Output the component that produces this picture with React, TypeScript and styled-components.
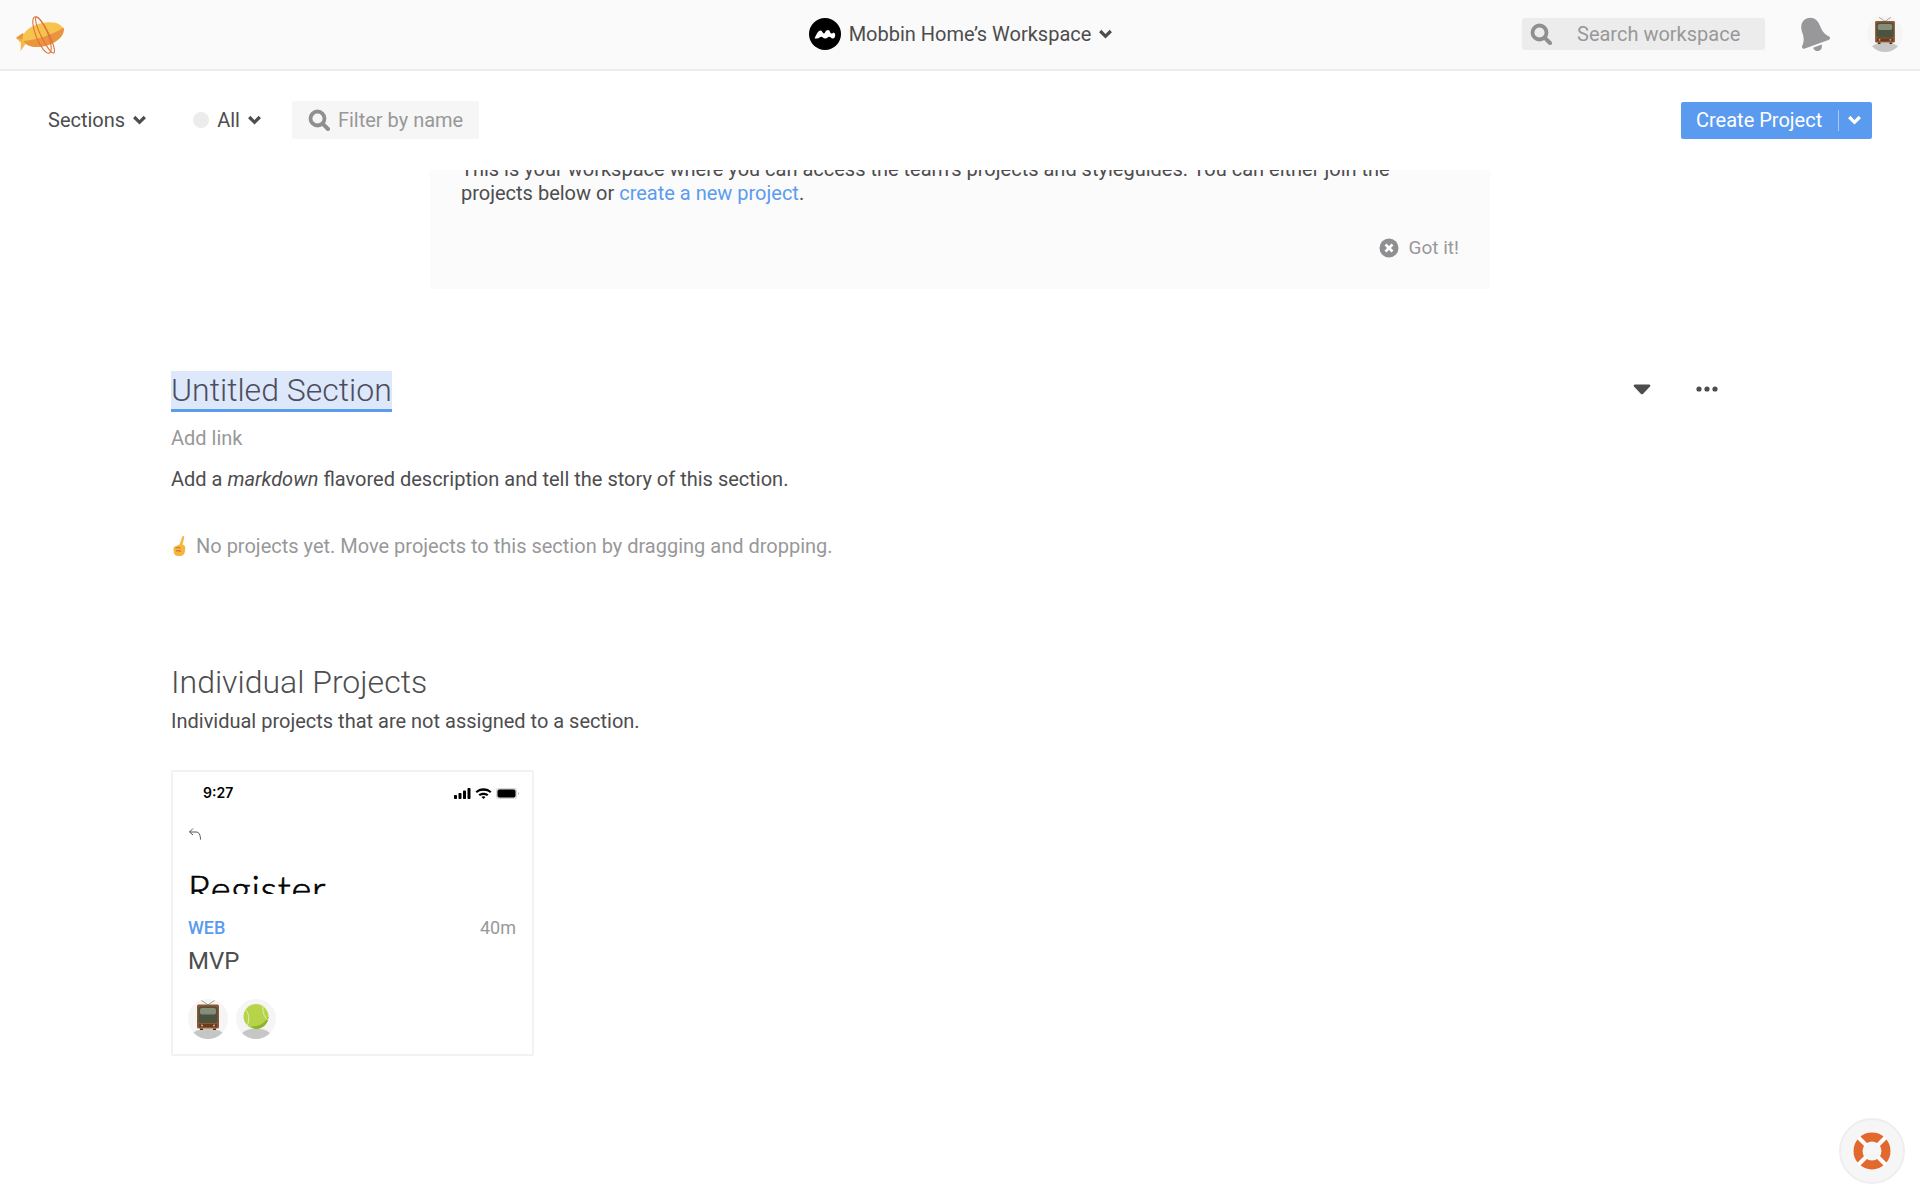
import React from "react";
import styled, { createGlobalStyle } from "styled-components";

const Global = createGlobalStyle`
  html, body { margin: 0; padding: 0; background: #fff; height: 100%; overflow: hidden; }
  body { font-family: Roboto, "Liberation Sans", sans-serif; color: #4a4a4a; }
  * { box-sizing: border-box; }
`;

const Page = styled.div`
  width: 1920px;
  height: 1200px;
  display: flex;
  flex-direction: column;
  overflow: hidden;
`;

const Header = styled.header`
  flex: none;
  height: 71px;
  background: #fafafa;
  border-bottom: 2px solid #ececec;
  display: grid;
  grid-template-columns: 1fr auto 1fr;
  align-items: center;
  padding: 0 17px 0 16px;
`;

const LogoSlot = styled.div`
  display: flex;
  align-items: center;
`;

const HeaderCenter = styled.div`
  display: flex;
  align-items: center;
  font-size: 20px;
  color: #4d4d4f;
  gap: 8px;
  margin: -1px 0 0 2px;
`;

const HeaderRight = styled.div`
  display: flex;
  align-items: center;
  justify-content: flex-end;
  margin-top: -1px;
`;

const SearchBox = styled.div`
  width: 243px;
  height: 32px;
  background: #ececec;
  border-radius: 2px;
  display: flex;
  align-items: center;
  gap: 25px;
  padding: 0 0 0 8px;
  font-size: 20px;
  color: #98989a;
  margin-right: 29px;
`;

const BellWrap = styled.div`
  width: 40px;
  height: 40px;
  margin-right: 33px;
`;

const Toolbar = styled.div`
  flex: none;
  height: 99px;
  background: #fff;
  display: flex;
  align-items: center;
  padding: 0 48px 1px;
  position: relative;
  z-index: 1;
`;

const MenuLabel = styled.div<{ $gap?: number }>`
  display: flex;
  align-items: center;
  font-size: 20px;
  color: #4d4d4f;
  gap: 8px;
  margin-right: ${(p) => p.$gap ?? 0}px;
`;

const Dot = styled.span`
  width: 16px;
  height: 16px;
  border-radius: 50%;
  background: #ececec;
`;

const FilterBox = styled.div`
  width: 187px;
  height: 38px;
  background: #f6f6f6;
  border-radius: 2px;
  display: flex;
  align-items: center;
  gap: 8px;
  padding-left: 16px;
  font-size: 20px;
  color: #98989a;
`;

const CreateButton = styled.div`
  margin-left: auto;
  width: 191px;
  height: 37px;
  background: #5b9bef;
  border-radius: 2px;
  display: flex;
  align-items: center;
  font-size: 20px;
  color: #fff;
  padding-left: 15px;
`;

const ButtonSplit = styled.span`
  width: 1px;
  height: 21px;
  background: rgba(255, 255, 255, 0.45);
  margin: 0 9px 0 16px;
`;

const Scroller = styled.main`
  flex: 1;
  min-height: 0;
  overflow: hidden;
  position: relative;
`;

const Notice = styled.section`
  width: 1060px;
  height: 132px;
  margin: 0 0 0 430px;
  background: #fbfbfb;
  padding: 0 31px;
  font-size: 20px;
  line-height: 24px;
  color: #4d4d4f;
`;

const NoticeText = styled.p`
  margin: -13px 0 0;
  width: 998px;
`;

const Link = styled.a`
  color: #5b9bef;
`;

const GotIt = styled.div`
  display: flex;
  justify-content: flex-end;
  align-items: center;
  gap: 10px;
  margin-top: 31px;
  font-size: 19px;
  color: #98989a;
`;

const Content = styled.div`
  padding: 0 0 0 171px;
`;

const SectionHead = styled.div`
  display: flex;
  align-items: center;
  justify-content: space-between;
  margin-top: 82px;
  padding-right: 202px;
`;

const SelectedTitle = styled.h2`
  margin: 0;
  font-weight: 300;
  font-size: 32px;
  line-height: 38px;
  height: 41px;
  color: #4d4d5f;
  background: #dde8fb;
  border-bottom: 3px solid #5b9bef;
`;

const SectionActions = styled.div`
  display: flex;
  align-items: center;
  gap: 45px;
  padding-bottom: 5px;
`;

const AddLink = styled.div`
  font-size: 20px;
  line-height: 24px;
  color: #98989a;
  margin-top: 14px;
`;

const Description = styled.p`
  margin: 17px 0 0;
  font-size: 20px;
  line-height: 24px;
  color: #4d4d4f;
`;

const Empty = styled.div`
  display: flex;
  align-items: center;
  gap: 7px;
  margin-top: 43px;
  font-size: 20px;
  line-height: 24px;
  color: #98989a;
`;

const IndividualTitle = styled.h2`
  margin: 104px 0 0;
  font-weight: 300;
  font-size: 32px;
  line-height: 40px;
  color: #4d4d4f;
`;

const IndividualText = styled.p`
  margin: 7px 0 0;
  font-size: 20px;
  line-height: 24px;
  color: #4d4d4f;
`;

const Card = styled.article`
  width: 363px;
  height: 286px;
  margin-top: 37px;
  background: #fff;
  border: 2px solid #f2f2f2;
  border-radius: 2px;
`;

const Preview = styled.div`
  height: 122px;
  overflow: hidden;
  color: #000;
  padding: 0 12px 0 15px;
`;

const StatusBar = styled.div`
  display: flex;
  align-items: center;
  justify-content: space-between;
  padding: 12px 0 0 15px;
  font-family: Inter, sans-serif;
  font-weight: 600;
  font-size: 14px;
  line-height: 18px;
`;

const BackIcon = styled.div`
  margin-top: 24px;
  height: 14px;
`;

const PreviewTitle = styled.div`
  margin-top: 25px;
  font-family: Lato, sans-serif;
  font-weight: 300;
  font-size: 38px;
  line-height: 46px;
  letter-spacing: 0.8px;
  -webkit-text-stroke: 0.7px #000;
`;

const CardBody = styled.div`
  padding: 0 16px 0 15px;
`;

const MetaRow = styled.div`
  display: flex;
  justify-content: space-between;
  align-items: center;
  margin-top: 23px;
  font-size: 18px;
  line-height: 22px;
`;

const Platform = styled.span`
  color: #5b9bef;
  font-weight: 500;
`;

const Duration = styled.span`
  color: #98989a;
`;

const CardName = styled.div`
  font-size: 24px;
  line-height: 30px;
  color: #4d4d4f;
  margin-top: 7px;
`;

const Avatars = styled.div`
  display: flex;
  gap: 8px;
  margin-top: 23px;
`;

const HelpButton = styled.div`
  position: fixed;
  right: 15px;
  bottom: 16px;
  width: 66px;
  height: 66px;
  border-radius: 50%;
  background: #f6f6f6;
  border: 2px solid #eeeeee;
  display: flex;
  align-items: center;
  justify-content: center;
`;

const Chevron = ({ color = "#4d4d4f" }: { color?: string }) => (
  <svg width="13" height="10" viewBox="0 0 13 10" fill="none">
    <path d="M1.2 2 6.500 7.300 11.800 2" stroke={color} strokeWidth="3.200" />
  </svg>
);

const Magnifier = ({ size = 22 }: { size?: number }) => (
  <svg width={size} height={size} viewBox="0 0 22 22" fill="none">
    <circle cx="9.500" cy="9.500" r="7" stroke="#8f8f91" strokeWidth="3.800" />
    <path d="M14.800 14.800 20 20" stroke="#8f8f91" strokeWidth="4" strokeLinecap="round" />
  </svg>
);

const Zeppelin = () => (
  <svg width="48" height="38" viewBox="0 0 48 38" fill="none">
    <path d="M0 22 7 17 11 26 4.500 35 5 27Z" fill="#f4b848" />
    <path d="M0 22 7 17 9 24Z" fill="#ea9340" />
    <ellipse cx="27" cy="18.500" rx="21" ry="11.500" transform="rotate(-15 27 18.500)" fill="#f6c34f" />
    <path d="M7.500 25C20 24 36 19 47.700 11.500 49.500 19 41 27 29.500 30 20 32.300 11 31 7.500 25Z" fill="#ea9340" />
    <ellipse cx="26" cy="19" rx="6" ry="19.500" transform="rotate(-22 26 19)" stroke="#e0733a" strokeWidth="1.100" />
    <ellipse cx="29" cy="19" rx="4" ry="20" transform="rotate(-26 29 19)" stroke="#e0733a" strokeWidth="1.100" />
  </svg>
);

const WorkspaceLogo = () => (
  <svg width="32" height="32" viewBox="0 0 32 32">
    <circle cx="16" cy="16" r="16" fill="#000" />
    <path
      d="M5.500 20.500C7.500 16.500 9 12.500 11.500 12.500 13.500 12.500 13.500 15.500 15 15.500 16 15.500 16.500 12 19 12 21 12 21 15.500 22.500 15.500 23.500 15.500 24 14.500 25 14.800 27 15.500 26.500 20.500 24 20.500 22 20.500 21.500 18.800 20.500 18.800 19 18.800 18.500 20.500 16 20.500 14 20.500 13.500 18.800 12.500 18.800 11 18.800 10 20.500 8 20.500Z"
      fill="#fff"
    />
  </svg>
);

const Bell = () => (
  <svg width="40" height="40" viewBox="0 0 40 40">
    <g transform="rotate(-20 20 20)" fill="#98989a">
      <path d="M19 3C12 3 9.500 9 9.500 14.500 9.500 20.500 8 24 4.500 27.500 3.500 29 4.500 30.500 6.500 30.500H31.500C33.500 30.500 34.500 29 33.500 27.500 30 24 28.500 20.500 28.500 14.500 28.500 9 26 3 19 3Z" />
      <path d="M14.500 32.500H23.500C23.500 35.500 21.500 37.500 19 37.500S14.500 35.500 14.500 32.500Z" />
    </g>
  </svg>
);

const TvAvatar = ({ size }: { size: number }) => (
  <svg width={size} height={size} viewBox="0 0 40 40">
    <circle cx="20" cy="20" r="20" fill="#f5f5f5" />
    <path d="M5.500 33.500C10 30.500 15 29.500 20 29.500S30 30.500 34.500 33.500C30.500 38 25 40 20 40S9.500 38 5.500 33.500Z" fill="#c6c6c6" />
    <path d="M20 6 13.500 1.500M20 6 26.500 1.500" stroke="#9a9a9a" strokeWidth="1" />
    <rect x="9" y="5.500" width="22" height="24" rx="1.500" fill="#91552f" />
    <rect x="10.500" y="7.500" width="19" height="16.500" rx="2.500" fill="#4a5240" />
    <rect x="12" y="9" width="16" height="6.500" rx="2" fill="#868e7a" />
    <rect x="11" y="25" width="18" height="3" fill="#6a3c1f" />
    <circle cx="14" cy="26.500" r="1" fill="#c9b79c" />
    <circle cx="26" cy="26.500" r="1" fill="#c9b79c" />
    <path d="M12 29.500H15V31H12ZM25 29.500H28V31H25Z" fill="#4d2a14" />
  </svg>
);

const BallAvatar = ({ size }: { size: number }) => (
  <svg width={size} height={size} viewBox="0 0 40 40">
    <circle cx="20" cy="20" r="20" fill="#f5f5f5" />
    <path d="M6 34C10 30.500 15 29.500 20 29.500S30 30.500 34 34C30 38 25 40 20 40S10 38 6 34Z" fill="#c6c6c6" />
    <circle cx="20" cy="17.500" r="12.500" fill="#b5d44a" />
    <path d="M20 30C26.500 30 32.500 24.500 32.500 17.500 29 24 24 27.500 15 27.500 16.500 29 18.500 29.700 20 30Z" fill="#8db230" />
    <path d="M9 10C13 14 14 21 11 27M27 6C26 12 28 18 32 21" stroke="#e3efb0" strokeWidth="1" fill="none" />
  </svg>
);

const PointUp = () => (
  <svg width="18" height="22" viewBox="0 0 18 22">
    <path d="M11.500 1C12.800.6 13.500 1.500 13.200 2.800L11.500 9.500C13.500 10 14.500 11.500 14.300 13.500L13.800 17C13.400 19.800 11.500 21 9 21H7C4.500 21 3 19.500 2.800 17.300L2.500 14C2.400 12.500 3.400 11.300 5 11L8.500 9.500Z" fill="#f4b63f" />
    <path d="M4.500 13C6.500 12.300 8.500 12.500 9.500 13.500M5 15.800C7 15.300 8.500 15.600 10 16.500" stroke="#c9792a" strokeWidth="1.200" fill="none" />
  </svg>
);

const CloseCircle = () => (
  <svg width="20" height="20" viewBox="0 0 20 20">
    <circle cx="10" cy="10" r="9.500" fill="#8f8f91" />
    <path d="M6.500 6.500 13.500 13.500M13.500 6.500 6.500 13.500" stroke="#fff" strokeWidth="2.600" />
  </svg>
);

const Lifebuoy = () => (
  <svg width="38" height="38" viewBox="0 0 38 38" fill="none">
    <circle cx="19" cy="19" r="14" stroke="#e2692e" strokeWidth="9" />
    <path d="M5.500 5.500 13 13M32.500 5.500 25 13M5.500 32.500 13 25M32.500 32.500 25 25" stroke="#fff" strokeWidth="4" />
  </svg>
);

const Signal = () => (
  <svg width="66" height="14" viewBox="0 0 66 14">
    <rect x="0" y="9" width="3" height="4" rx="0.800" />
    <rect x="4.500" y="7" width="3" height="6" rx="0.800" />
    <rect x="9" y="4.500" width="3" height="8.500" rx="0.800" />
    <rect x="13.500" y="2" width="3" height="11" rx="0.800" />
    <path d="M21.500 5.500C25.500 1 33.500 1 37.500 5.500L36 7C33 4 26 4 23 7ZM24.500 8.500C27 6 32 6 34.500 8.500L33 10C31 8.500 28 8.500 26 10ZM27.500 11C28.500 10 30.500 10 31.500 11L29.500 13Z" />
    <rect x="42" y="2" width="21" height="11" rx="3" fill="#d6d6d6" />
    <rect x="43.500" y="3.500" width="18" height="8" rx="2" />
    <path d="M64 6V9C65.200 8.700 65.200 6.300 64 6Z" fill="#b0b0b0" />
  </svg>
);

const Back = () => (
  <svg width="14" height="14" viewBox="0 0 14 14" fill="none">
    <path d="M5 1.500 1.500 5 5 8M1.500 5H8C11 5 12.500 8 12.500 12.500" stroke="#555" strokeWidth="1" />
  </svg>
);

const SectionCaret = () => (
  <svg width="18" height="12" viewBox="0 0 18 12">
    <path d="M2 1.500H16C17.300 1.500 17.800 2.600 17 3.600L10.200 10.800C9.500 11.500 8.500 11.500 7.800 10.800L1 3.600C.2 2.600.7 1.500 2 1.500Z" fill="#4d4d4f" />
  </svg>
);

const Dots = () => (
  <svg width="22" height="6" viewBox="0 0 22 6" fill="#4d4d4f">
    <circle cx="3" cy="3" r="2.600" />
    <circle cx="11" cy="3" r="2.600" />
    <circle cx="19" cy="3" r="2.600" />
  </svg>
);

export default function App() {
  return (
    <Page>
      <Global />
      <Header>
        <LogoSlot><Zeppelin /></LogoSlot>
        <HeaderCenter>
          <WorkspaceLogo />
          <span>Mobbin Home’s Workspace</span>
          <Chevron />
        </HeaderCenter>
        <HeaderRight>
          <SearchBox>
            <Magnifier />
            <span>Search workspace</span>
          </SearchBox>
          <BellWrap><Bell /></BellWrap>
          <TvAvatar size={36} />
        </HeaderRight>
      </Header>
      <Toolbar>
        <MenuLabel $gap={47}>
          <span>Sections</span>
          <Chevron />
        </MenuLabel>
        <MenuLabel $gap={31}>
          <Dot />
          <span>All</span>
          <Chevron />
        </MenuLabel>
        <FilterBox>
          <Magnifier />
          <span>Filter by name</span>
        </FilterBox>
        <CreateButton>
          <span>Create Project</span>
          <ButtonSplit />
          <Chevron color="#fff" />
        </CreateButton>
      </Toolbar>
      <Scroller>
        <Notice>
          <NoticeText>
            This is your workspace where you can access the team’s projects and styleguides. You can either join the
            projects below or <Link>create a new project</Link>.
          </NoticeText>
          <GotIt>
            <CloseCircle />
            <span>Got it!</span>
          </GotIt>
        </Notice>
        <Content>
          <SectionHead>
            <SelectedTitle>Untitled Section</SelectedTitle>
            <SectionActions>
              <SectionCaret />
              <Dots />
            </SectionActions>
          </SectionHead>
          <AddLink>Add link</AddLink>
          <Description>
            Add a <em>markdown</em> flavored description and tell the story of this section.
          </Description>
          <Empty>
            <PointUp />
            <span>No projects yet. Move projects to this section by dragging and dropping.</span>
          </Empty>
          <IndividualTitle>Individual Projects</IndividualTitle>
          <IndividualText>Individual projects that are not assigned to a section.</IndividualText>
          <Card>
            <Preview>
              <StatusBar>
                <span>9:27</span>
                <Signal />
              </StatusBar>
              <BackIcon><Back /></BackIcon>
              <PreviewTitle>Register</PreviewTitle>
            </Preview>
            <CardBody>
              <MetaRow>
                <Platform>WEB</Platform>
                <Duration>40m</Duration>
              </MetaRow>
              <CardName>MVP</CardName>
              <Avatars>
                <TvAvatar size={40} />
                <BallAvatar size={40} />
              </Avatars>
            </CardBody>
          </Card>
        </Content>
      </Scroller>
      <HelpButton><Lifebuoy /></HelpButton>
    </Page>
  );
}
